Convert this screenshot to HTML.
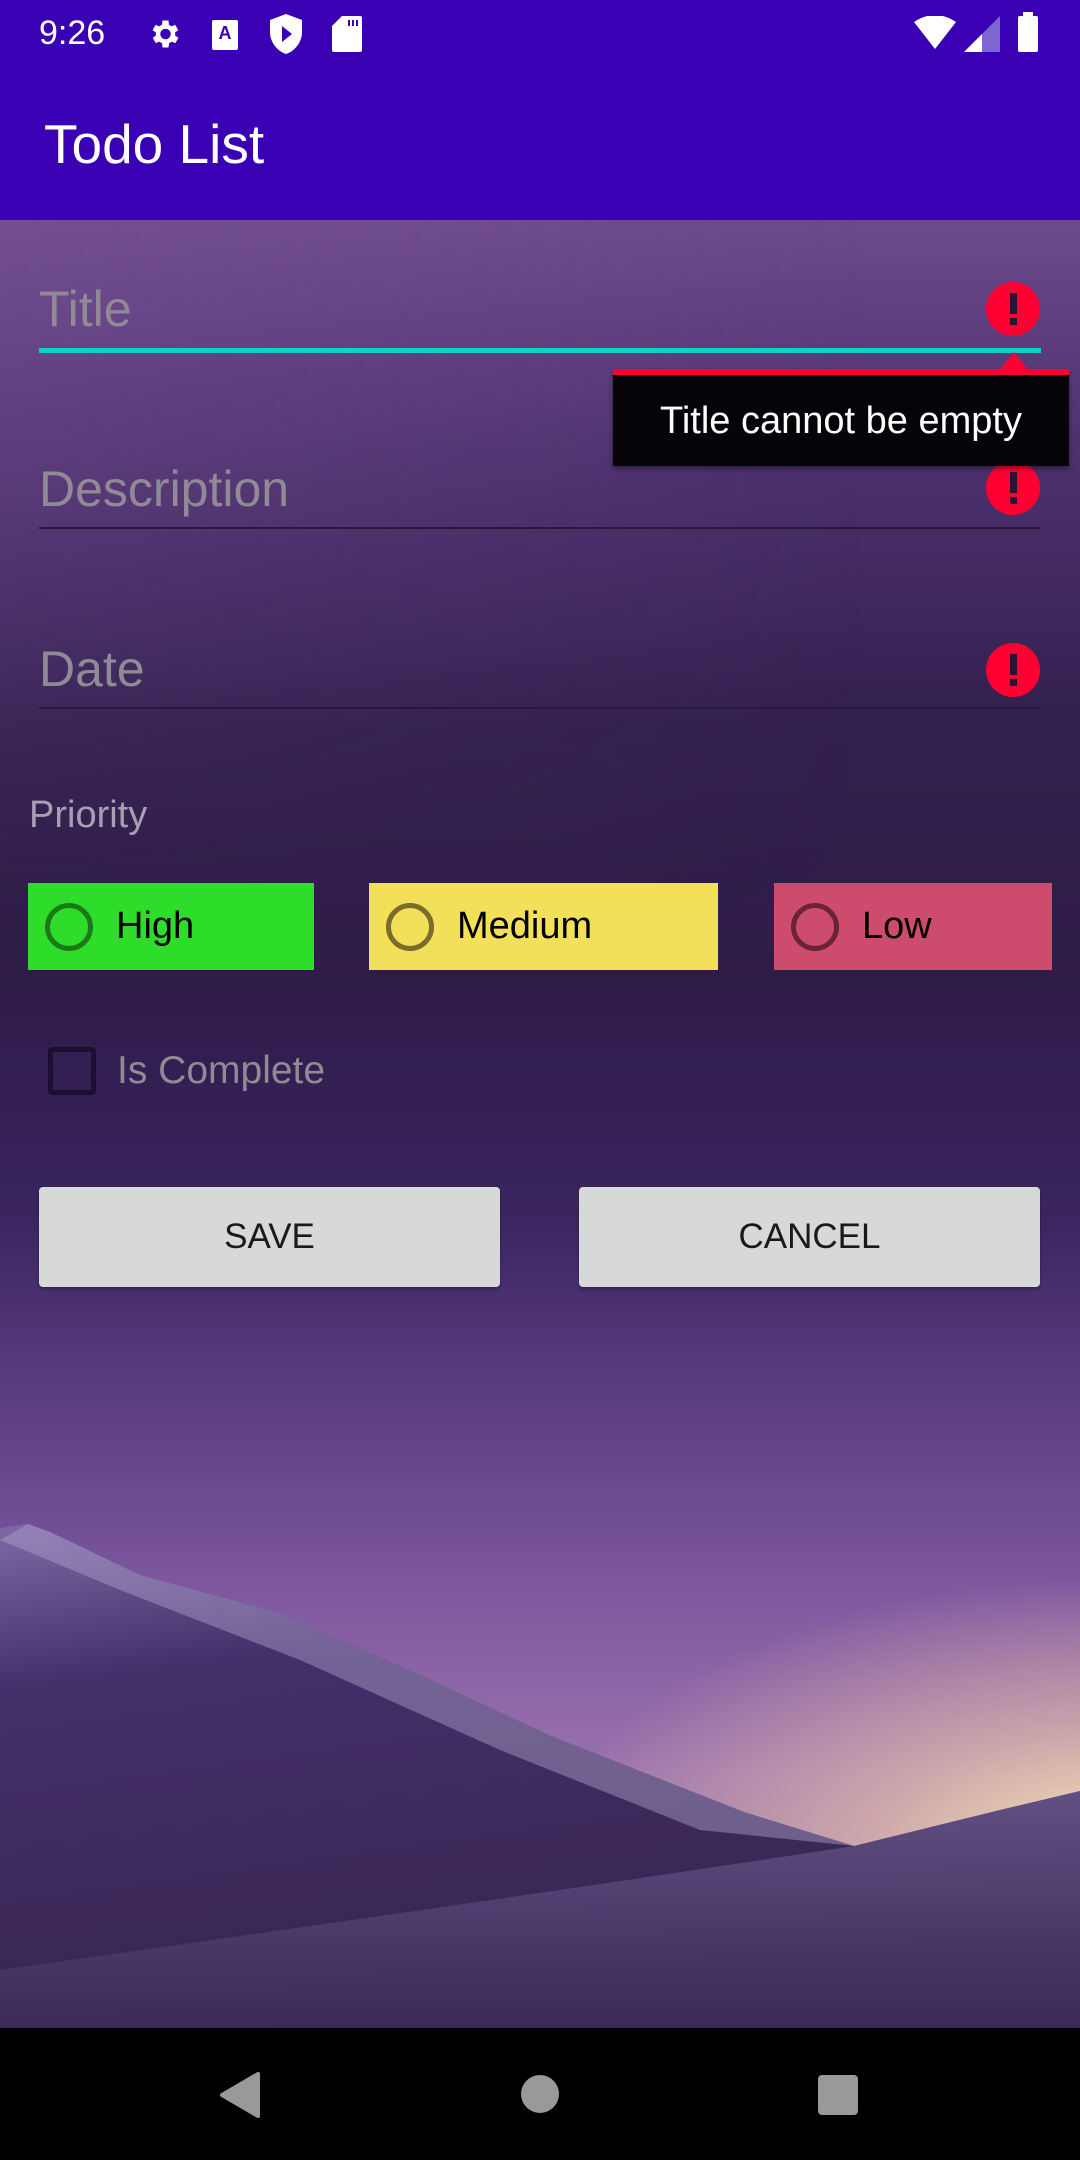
<!DOCTYPE html>
<html><head><meta charset="utf-8">
<style>
*{margin:0;padding:0;box-sizing:border-box}
body{width:1080px;height:2160px;position:relative;overflow:hidden;font-family:"Liberation Sans",sans-serif;background:#000}
.a{position:absolute}
.lbl{position:absolute;color:#8f8a95;font-size:50px;left:39px}
.line{position:absolute;left:39px;width:1002px;height:2px;background:#2a1838}
.err{position:absolute;width:54px;height:54px;border-radius:50%;background:#ff0033;left:986px}
.err:before{content:"";position:absolute;left:24px;top:11px;width:7px;height:21px;background:#2a1238}
.err:after{content:"";position:absolute;left:24px;top:36px;width:7px;height:7px;background:#2a1238}
.rb{position:absolute;top:883px;height:87px;font-size:38px;color:#000;line-height:87px;padding-left:88px}
.rb i{position:absolute;left:17px;top:20px;width:48px;height:48px;border-radius:50%;border:5px solid}
.btn{position:absolute;top:1187px;height:100px;width:461px;background:#d7d8d8;border-radius:4px;font-size:35px;color:#1a1a1a;text-align:center;line-height:100px;font-weight:500;box-shadow:0 2px 3px rgba(0,0,0,.3)}
</style></head><body>
<div class="a" style="left:0;top:220px;width:1080px;height:1808px;background:linear-gradient(180deg,#6d4a8c 0%,#4f3270 12%,#32204e 28%,#2e1b48 42%,#3a2560 55%,#5f3f86 66%,#7f58a0 76%,#9a72ae 86%,#9d7aa8 100%)"></div>
<div class="a" style="left:0;top:220px;width:1080px;height:700px;background:linear-gradient(90deg,rgba(130,90,160,.3),rgba(0,0,0,0) 80%);-webkit-mask-image:linear-gradient(180deg,#000 30%,transparent);mask-image:linear-gradient(180deg,#000 30%,transparent)"></div>
<div class="a" style="left:500px;top:1550px;width:900px;height:560px;background:radial-gradient(ellipse at 70% 55%,rgba(255,240,180,.95) 0%,rgba(240,200,170,.6) 30%,rgba(200,150,180,0) 65%)"></div>
<svg class="a" style="left:0;top:1500px" width="1080" height="528">
<defs><linearGradient id="d" x1="0" y1="0" x2="0.3" y2="1"><stop offset="0" stop-color="#7e6aa6"/><stop offset="0.3" stop-color="#44306a"/><stop offset="1" stop-color="#36244f"/></linearGradient>
<linearGradient id="e" x1="0" y1="0" x2="0" y2="1"><stop offset="0" stop-color="#7c6aa0"/><stop offset="1" stop-color="#3e2c5c"/></linearGradient></defs>
<path d="M0 28 L28 24 L50 32 L140 75 L276 112 L420 175 L551 236 L744 312 L854 346 L1000 310 L1080 291 L1080 528 L0 528Z" fill="url(#d)"/>
<path d="M0 40 L28 24 L50 32 L140 75 L276 112 L420 175 L551 236 L744 312 L854 346 L700 330 L500 250 L300 160 L120 90Z" fill="#b0a2cc" opacity=".45"/>
<path d="M854 346 L1000 310 L1080 291 L1080 528 L0 528 L0 470 Q500 400 854 346Z" fill="url(#e)" opacity=".6"/>
</svg>
<!-- status bar -->
<div class="a" style="left:0;top:0;width:1080px;height:220px;background:#3a00b3"></div>
<div class="a" style="left:39px;top:14px;color:#fff;font-size:34px">9:26</div>
<svg class="a" style="left:146px;top:16px" width="36" height="36" viewBox="0 0 24 24"><path fill="#fff" d="M19.4 13a7.5 7.5 0 000-2l2.1-1.6-2-3.5-2.5 1a7 7 0 00-1.7-1L15 3h-4l-.4 2.9a7 7 0 00-1.7 1l-2.5-1-2 3.5L6.6 11a7.5 7.5 0 000 2l-2.1 1.6 2 3.5 2.5-1a7 7 0 001.7 1L11 21h4l.4-2.9a7 7 0 001.7-1l2.5 1 2-3.5zM13 15.5a3.5 3.5 0 110-7 3.5 3.5 0 010 7z"/></svg>
<div class="a" style="left:212px;top:20px;width:26px;height:30px;background:#fff;border-radius:2px;color:#3a00b3;font-size:18px;font-weight:bold;text-align:center;line-height:26px">A</div>
<svg class="a" style="left:270px;top:14px" width="32" height="40" viewBox="0 0 16 20"><path fill="#fff" d="M8 0L0 3v6c0 5 3.5 9.5 8 11 4.5-1.5 8-6 8-11V3z"/><path fill="#3a00b3" d="M6 6v8l5-4z"/></svg>
<svg class="a" style="left:332px;top:16px" width="30" height="36" viewBox="0 0 15 18"><path fill="#fff" d="M5 0h9a1 1 0 011 1v16a1 1 0 01-1 1H1a1 1 0 01-1-1V5z"/><path fill="#3a00b3" d="M8 2h1v3H8zM10 2h1v3h-1zM12 2h1v3h-1z"/></svg>
<svg class="a" style="left:914px;top:16px" width="42" height="34" viewBox="0 0 42 34"><path fill="#fff" d="M0 6Q21-8 42 6L21 33Z"/></svg>
<svg class="a" style="left:964px;top:16px" width="36" height="36"><path fill="#7d66d0" d="M36 0V36H0Z"/><path fill="#fff" d="M18 18V36H0Z"/></svg>
<div class="a" style="left:1018px;top:16px;width:20px;height:36px;background:#fff;border-radius:2px"></div>
<div class="a" style="left:1023px;top:12px;width:10px;height:5px;background:#fff"></div>
<div class="a" style="left:44px;top:112px;color:#fff;font-size:55px;font-weight:500">Todo List</div>
<!-- form -->
<div class="lbl" style="top:280px">Title</div>
<div class="a" style="left:39px;top:348px;width:1002px;height:5px;background:#0fd3bf"></div>
<div class="err" style="top:282px"></div>
<div class="lbl" style="top:460px">Description</div>
<div class="line" style="top:527px"></div>
<div class="err" style="top:461px"></div>
<div class="lbl" style="top:640px">Date</div>
<div class="line" style="top:707px"></div>
<div class="err" style="top:643px"></div>
<!-- tooltip -->
<svg class="a" style="left:998px;top:352px" width="32" height="20"><path d="M16 0L32 20H0Z" fill="#ff0033"/></svg>
<div class="a" style="left:613px;top:369px;width:456px;height:97px;background:#060409;border-top:6px solid #ff0033;color:#fff;font-size:38px;text-align:center;line-height:92px;box-shadow:0 3px 5px rgba(0,0,0,.4)">Title cannot be empty</div>
<div class="a" style="left:29px;top:794px;color:#a89fb5;font-size:38px">Priority</div>
<div class="rb" style="left:28px;width:286px;background:#2ddd2a"><i style="border-color:#1a7a18"></i>High</div>
<div class="rb" style="left:369px;width:349px;background:#f2df5a"><i style="border-color:#7a6c2a"></i>Medium</div>
<div class="rb" style="left:774px;width:278px;background:#cd4c6e"><i style="border-color:#6a2238"></i>Low</div>
<div class="a" style="left:48px;top:1047px;width:48px;height:48px;border:5px solid #1c1030;border-radius:4px"></div>
<div class="a" style="left:117px;top:1049px;color:#8f8a95;font-size:39px">Is Complete</div>
<div class="btn" style="left:39px">SAVE</div>
<div class="btn" style="left:579px">CANCEL</div>
<!-- nav -->
<div class="a" style="left:0;top:2028px;width:1080px;height:132px;background:#000"></div>
<svg class="a" style="left:218px;top:2072px" width="44" height="46"><path d="M40 2V44L4 23Z" fill="#999" stroke="#999" stroke-width="4" stroke-linejoin="round"/></svg>
<div class="a" style="left:521px;top:2075px;width:38px;height:38px;border-radius:50%;background:#999"></div>
<div class="a" style="left:818px;top:2075px;width:40px;height:40px;border-radius:4px;background:#999"></div>
</body></html>
